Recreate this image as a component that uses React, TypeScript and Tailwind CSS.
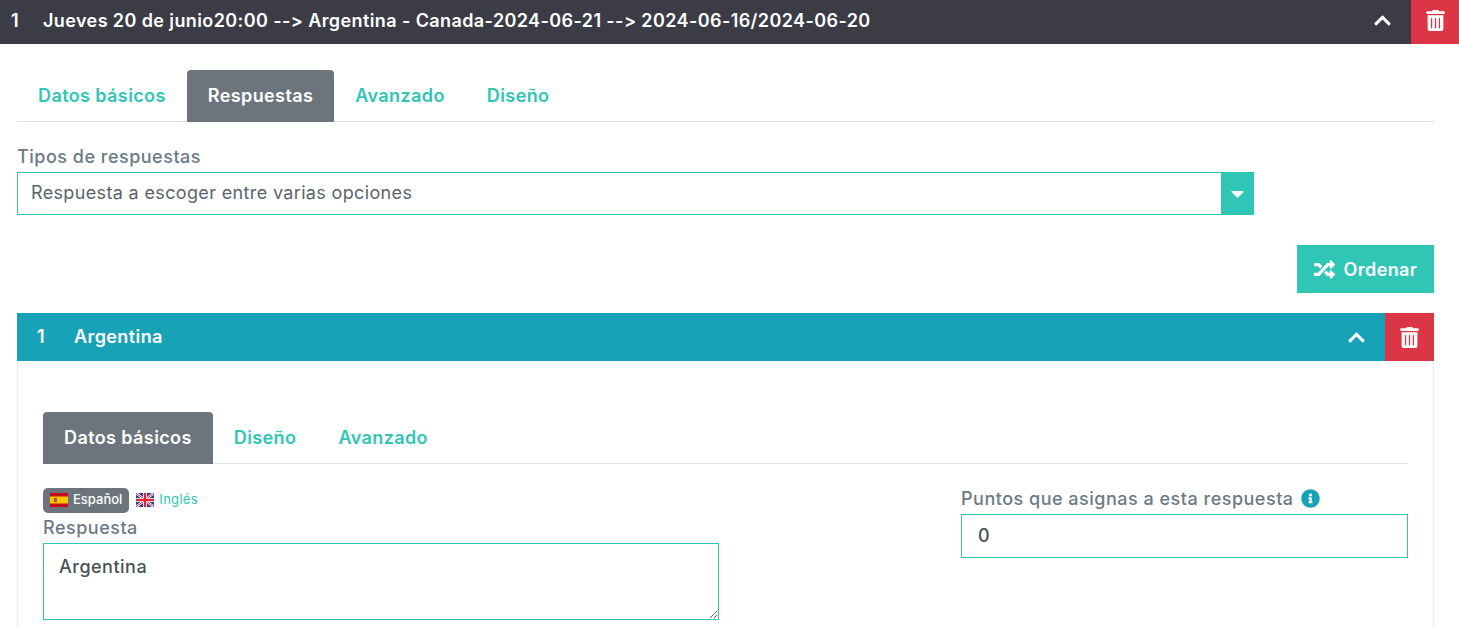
import React from 'react';
import { FaCaretDown, FaChevronUp, FaInfoCircle, FaRandom, FaTrashAlt } from 'react-icons/fa';

const FlagEs = () => (
  <svg width="18" height="14" viewBox="0 0 18 14">
    <rect width="18" height="14" fill="#c60b1e" />
    <rect y="3.5" width="18" height="7" fill="#ffc400" />
    <rect x="4" y="5" width="3" height="4" fill="#ad5a1f" />
  </svg>
);

const FlagEn = () => (
  <svg width="18" height="14" viewBox="0 0 18 14">
    <rect width="18" height="14" fill="#2b3f86" />
    <path d="M0 0L18 14M18 0L0 14" stroke="#fff" strokeWidth="2.5" />
    <path d="M0 0L18 14M18 0L0 14" stroke="#d8283c" strokeWidth="1" />
    <path d="M9 0V14M0 7H18" stroke="#fff" strokeWidth="4" />
    <path d="M9 0V14M0 7H18" stroke="#d8283c" strokeWidth="2.5" />
  </svg>
);

const Tabs = ({ items, active }: { items: string[]; active: string }) => (
  <div className="flex h-[52px] border-b border-[#dee2e6]">
    {items.map((item) => (
      <div
        key={item}
        className={
          item === active
            ? 'flex h-[52px] items-center rounded-t bg-[#6c757d] px-[21px] pb-[2px] text-[18px] font-semibold tracking-[0.4px] text-white'
            : 'flex h-[52px] items-center px-[21px] pb-[2px] text-[18px] font-semibold tracking-[0.4px] text-[#2fc6b5]'
        }
      >
        {item}
      </div>
    ))}
  </div>
);

const App = () => {
  return (
    <div className="h-screen overflow-hidden bg-white font-['Inter',sans-serif] tracking-[0.5px] text-[#495057] [font-variant-ligatures:none] [font-feature-settings:'calt'_0,'liga'_0]">
      <div className="flex h-[44px] items-center bg-[#3c3c46] pb-[4px] text-white">
        <span className="w-[43px] pl-[11px] text-[18px] font-semibold">1</span>
        <span className="flex-1 text-[18px] font-semibold tracking-[0.4px]">
          Jueves 20 de junio20:00 --&gt; Argentina - Canada-2024-06-21 --&gt; 2024-06-16/2024-06-20
        </span>
        <FaChevronUp className="mr-[19px] text-[19px]" />
        <div className="-mb-[4px] flex h-[44px] w-[48px] items-center justify-center bg-[#dc3545] pb-[4px]">
          <FaTrashAlt className="text-[21px]" />
        </div>
      </div>

      <div className="mr-[25px] ml-[17px] pt-[26px]">
        <Tabs items={['Datos básicos', 'Respuestas', 'Avanzado', 'Diseño']} active="Respuestas" />

        <div className="mt-[21px] mb-[2px] text-[18px] leading-[27px] font-medium text-[#6c7a86]">Tipos de respuestas</div>
        <div className="flex h-[43px] w-[1237px] items-center border border-[#2fc6b5] pl-[13px] text-[18px] tracking-[0.35px] text-[#5c646b]">
          <span className="flex-1 pb-[2px]">Respuesta a escoger entre varias opciones</span>
          <div className="flex h-[43px] w-[32px] items-center justify-center bg-[#2fc6b5] text-white">
            <FaCaretDown className="text-[21px]" />
          </div>
        </div>

        <div className="mt-[30px] flex justify-end">
          <div className="flex h-[48px] w-[137px] items-center justify-center gap-[9px] bg-[#2fc6b5] text-[18px] font-semibold tracking-[0.4px] text-white">
            <FaRandom className="text-[21px]" />
            Ordenar
          </div>
        </div>

        <div className="mt-[20px] flex h-[48px] items-center bg-[#17a2b8] text-white">
          <span className="w-[57px] pl-[20px] pb-[2px] text-[18px] font-semibold">1</span>
          <span className="flex-1 pb-[2px] text-[18px] font-semibold tracking-[0.4px]">Argentina</span>
          <FaChevronUp className="mr-[19px] text-[19px]" />
          <div className="flex h-[48px] w-[49px] items-center justify-center bg-[#dc3545]">
            <FaTrashAlt className="text-[21px]" />
          </div>
        </div>

        <div className="h-[400px] border-x border-[#e9ecef] px-[25px] pt-[51px]">
          <Tabs items={['Datos básicos', 'Diseño', 'Avanzado']} active="Datos básicos" />

          <div className="mt-[24px] flex">
            <div className="w-[676px]">
              <div className="flex items-center gap-[7px] text-[13px] tracking-[0px]">
                <div className="flex h-[25px] items-center gap-[5px] rounded-[5px] bg-[#6c757d] px-[7px] pb-[1px] font-medium text-white">
                  <FlagEs />
                  Español
                </div>
                <div className="flex items-center gap-[5px] pb-[1px] tracking-[0.3px] text-[#2fc6b5]">
                  <FlagEn />
                  Inglés
                </div>
              </div>
              <div className="mt-[1px] mb-[2px] text-[18px] leading-[27px] font-medium text-[#6c7a86]">Respuesta</div>
              <textarea
                readOnly
                value="Argentina"
                className="block h-[77px] w-[676px] border border-[#2fc6b5] px-[15px] py-[9px] text-[18px] font-medium outline-none"
              />
            </div>
            <div className="ml-[242px] flex-1">
              <div className="flex h-[26px] items-center gap-[7px] pb-[6px] text-[18px] font-medium text-[#6c7a86]">
                Puntos que asignas a esta respuesta
                <FaInfoCircle className="text-[19px] text-[#17a2b8]" />
              </div>
              <div className="flex h-[44px] items-center border border-[#2fc6b5] pb-[2px] pl-[16px] text-[18px] font-medium">0</div>
            </div>
          </div>
        </div>
      </div>
    </div>
  );
};

export default App;
